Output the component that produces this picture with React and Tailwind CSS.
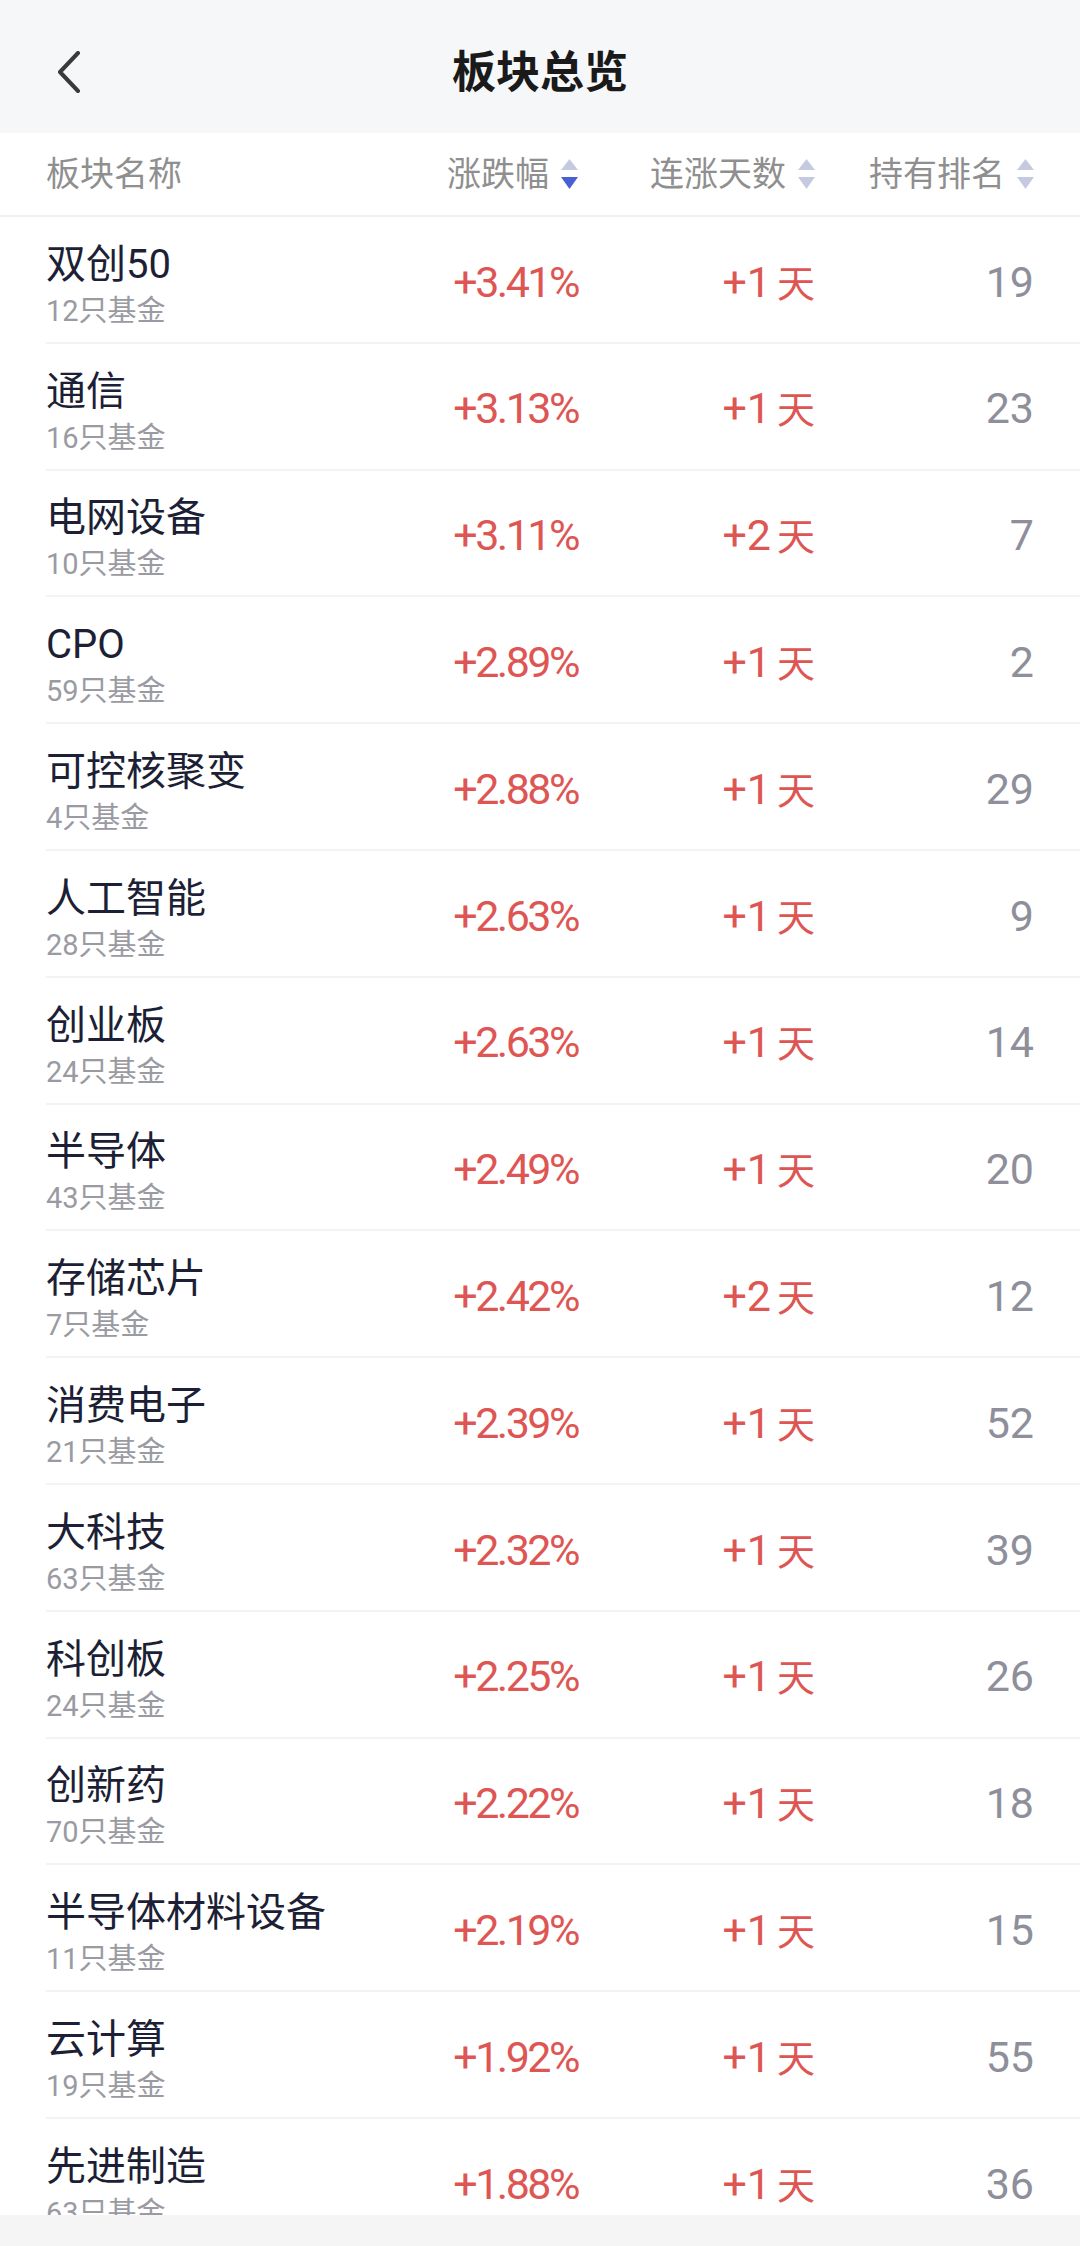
import React from "react";

const rows = [
  { name: "双创50", funds: 12, pct: "+3.41%", days: "+1", rank: 19 },
  { name: "通信", funds: 16, pct: "+3.13%", days: "+1", rank: 23 },
  { name: "电网设备", funds: 10, pct: "+3.11%", days: "+2", rank: 7 },
  { name: "CPO", funds: 59, pct: "+2.89%", days: "+1", rank: 2 },
  { name: "可控核聚变", funds: 4, pct: "+2.88%", days: "+1", rank: 29 },
  { name: "人工智能", funds: 28, pct: "+2.63%", days: "+1", rank: 9 },
  { name: "创业板", funds: 24, pct: "+2.63%", days: "+1", rank: 14 },
  { name: "半导体", funds: 43, pct: "+2.49%", days: "+1", rank: 20 },
  { name: "存储芯片", funds: 7, pct: "+2.42%", days: "+2", rank: 12 },
  { name: "消费电子", funds: 21, pct: "+2.39%", days: "+1", rank: 52 },
  { name: "大科技", funds: 63, pct: "+2.32%", days: "+1", rank: 39 },
  { name: "科创板", funds: 24, pct: "+2.25%", days: "+1", rank: 26 },
  { name: "创新药", funds: 70, pct: "+2.22%", days: "+1", rank: 18 },
  { name: "半导体材料设备", funds: 11, pct: "+2.19%", days: "+1", rank: 15 },
  { name: "云计算", funds: 19, pct: "+1.92%", days: "+1", rank: 55 },
  { name: "先进制造", funds: 63, pct: "+1.88%", days: "+1", rank: 36 },
];

// up/down triangles next to the column titles
function SortIcon({ active }) {
  return (
    <svg width="17" height="30" viewBox="0 0 17 30">
      <polygon points="8.5,0 0,11 17,11" fill="#c6cae0" />
      <polygon points="0,18 17,18 8.5,30" fill={active ? "#4a5fd4" : "#c6cae0"} />
    </svg>
  );
}

function HeadCell({ label, width, active }) {
  return (
    <div className={`${width} flex items-center justify-end gap-[12px]`}>
      <span>{label}</span>
      <SortIcon active={active} />
    </div>
  );
}

export default function App() {
  return (
    <div
      className="w-[1080px] h-[2246px] flex flex-col overflow-hidden bg-white"
      style={{ fontFamily: 'Roboto, "Noto Sans CJK SC", sans-serif' }}
    >
      {/* top bar */}
      <div className="h-[133px] shrink-0 bg-[#f6f7f9] grid grid-cols-[1fr_auto_1fr] items-center pt-[10px]">
        <div className="pl-[56px] flex items-center">
          <svg width="26" height="42" viewBox="0 0 26 42">
            <polyline
              points="22,2 4,21 22,40"
              fill="none"
              stroke="#3a3a3a"
              strokeWidth="4"
              strokeLinecap="round"
              strokeLinejoin="round"
            />
          </svg>
        </div>
        <div className="text-[44px] font-bold text-[#1a1a1a] leading-none pt-[3px]">板块总览</div>
        <div />
      </div>

      {/* column titles */}
      <div className="h-[84px] shrink-0 flex items-center px-[46px] border-b-2 border-[#f0f0f2] text-[34px] text-[#8f8f8f]">
        <div className="flex-1">板块名称</div>
        <HeadCell label="涨跌幅" width="w-[200px]" active />
        <HeadCell label="连涨天数" width="w-[237px]" />
        <HeadCell label="持有排名" width="w-[219px]" />
      </div>

      {/* list */}
      <div className="flex-1 overflow-hidden">
        {rows.map((r, i) => (
          <div
            key={i}
            className="h-[126.8px] ml-[46px] pr-[46px] pt-[5px] flex items-center border-b-2 border-[#f3f3f5]"
          >
            <div className="flex-1 flex flex-col pt-[10px]">
              <span className="text-[40px] leading-[48px] text-[#1c1f35]">{r.name}</span>
              <span className="text-[29px] leading-[44px] text-[#9a9ba2]">{r.funds}只基金</span>
            </div>
            <div className="w-[200px] text-right text-[43px] tracking-[-2.5px] text-[#de5653]">
              {r.pct}
            </div>
            <div className="w-[237px] text-right text-[43px] text-[#de5653]">
              {r.days}
              <span className="ml-[6px] text-[38px]">天</span>
            </div>
            <div className="w-[219px] text-right text-[43px] text-[#8e8f9a]">{r.rank}</div>
          </div>
        ))}
      </div>

      {/* bottom strip */}
      <div className="h-[31px] shrink-0 bg-[#f5f5f5]" />
    </div>
  );
}
